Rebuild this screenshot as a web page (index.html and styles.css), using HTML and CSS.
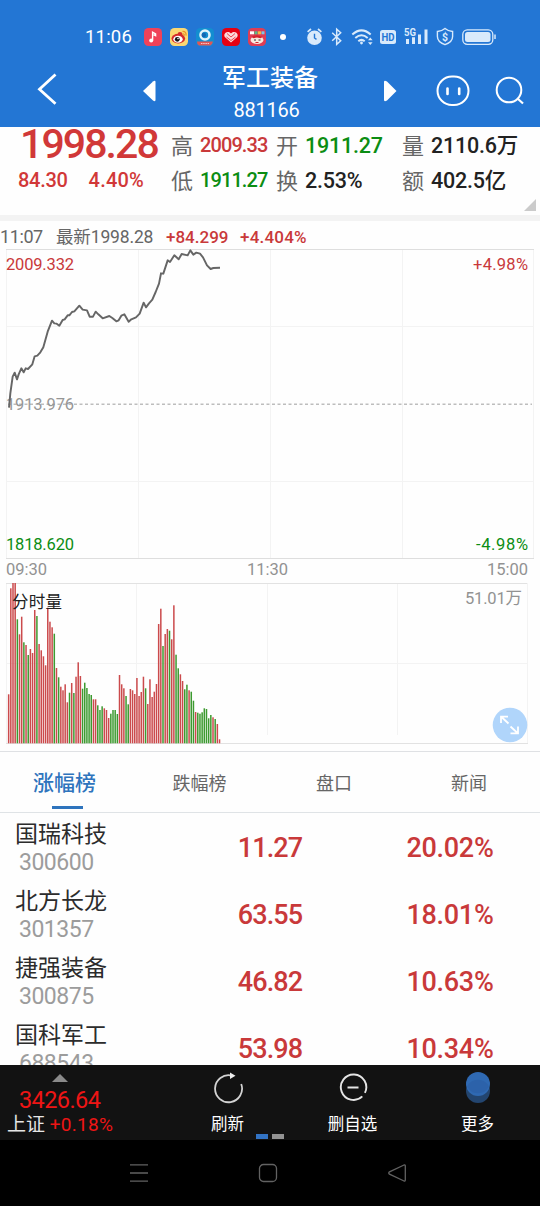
FILE: index.html
```html
<!DOCTYPE html>
<html lang="zh-CN">
<head>
<meta charset="utf-8">
<title>军工装备 881166</title>
<link rel="stylesheet" href="styles.css">
</head>
<body>
<div class="phone">
  <header class="top">
    <div class="status">
      <span class="clock">11:06</span>
      <svg class="apps" width="146" height="20" viewBox="0 0 146 20">
        <rect x="1" y="1" width="18" height="18" rx="4.5" fill="#f04259"/>
        <path d="M9.6 13.2V5.2l3 1.8v1.6l-2-1" fill="none" stroke="#fff" stroke-width="1.4"/><circle cx="8.2" cy="13.4" r="2" fill="#fff"/>
        <rect x="27" y="1" width="18" height="18" rx="4.5" fill="#fbd873"/>
        <ellipse cx="35.3" cy="11.6" rx="6.8" ry="4.9" fill="#d52b2a"/><circle cx="37" cy="7.3" r="2.4" fill="#d52b2a"/><ellipse cx="35" cy="12.3" rx="4.7" ry="3.5" fill="#fff"/><circle cx="34.3" cy="12.3" r="2.4" fill="#111"/><circle cx="35" cy="11.6" r=".8" fill="#fff"/><path d="M39.5 4.4q4-.2 3.5 4.2M39.5 6.8q2-.2 1.7 1.8" fill="none" stroke="#ed9427" stroke-width="1.3"/>
        <rect x="53" y="1" width="18" height="18" rx="4.5" fill="#138ed0"/>
        <circle cx="62" cy="8" r="4.5" fill="none" stroke="#dff3fb" stroke-width="2.6"/><circle cx="60.800" cy="8" r="2.300" fill="#1268b4"/><path d="M54 14.5h16l-1 2.6-1.6 1.4H56l-1.6-1.4z" fill="#df5656"/><path d="M58 16.5h8" stroke="#fbc5c5" stroke-dasharray="1.5 .7"/>
        <rect x="79" y="1" width="18" height="18" rx="4.5" fill="#e60012"/>
        <path d="M88 15.6 82.300 10.600c-3-3.200 1.500-8 5.700-4.200 4.200-3.800 8.700 1 5.700 4.200z" fill="#fbdada"/><path d="m84 6.500 4 3.500 4-3.500M83.500 10l4.500 3.500 4.500-3.500" fill="none" stroke="#e60012" stroke-width=".7"/>
        <rect x="105" y="1" width="18" height="18" rx="4.5" fill="#df3d55"/>
        <path d="M107 4.3h4v3h-4z" fill="#fff"/><path d="M111.5 4.3h3v3h-3z" fill="#56bc86"/><path d="M115 4.3h3v3h-3z" fill="#f5b840"/><path d="M118.5 4.3h3v3h-3z" fill="#7cc8e8"/><ellipse cx="114" cy="13" rx="6.5" ry="4" fill="#fae9df"/><path d="M108.5 10q5.5-3.500 11 0l-2 1.200-3.500-.6-3.500.6z" fill="#d5222d"/><path d="M111 13h2m2.500 0h2" stroke="#333"/><path d="M112.500 15.500h3" stroke="#d5222d"/>
        <circle cx="140" cy="10" r="3" fill="#fff"/>
      </svg>
      <svg class="sys" width="192" height="20" viewBox="0 0 192 20">
        <g fill="#d9eafb" stroke="#d9eafb">
          <circle cx="8.5" cy="10.8" r="7.3" stroke="none"/><path d="M1.6 4.8 5 2m7 0 3.4 2.8" fill="none" stroke-width="1.7"/><path d="M8.5 6.8v4.2l2 1.4" fill="none" stroke="#2376d4" stroke-width="1.4"/>
          <path d="m26.2 5.8 8.5 8-4 3.6V2.2l4 3.6-8.5 8" fill="none" stroke-width="1.5"/>
          <g fill="none" stroke-width="2"><path d="M46.3 7.5q9.2-8.3 18.4 0M49.3 11q6.2-5.4 12.4 0M52.3 14.2q3.2-2.7 6.4 0"/></g><circle cx="55.5" cy="16" r="1.4" stroke="none"/><path d="m62 13.2 2.3-2.7 2.3 2.7zm0 2 2.3 2.7 2.3-2.7z" stroke="none"/>
          <rect x="74" y="3" width="16" height="14" rx="2.5" stroke="none"/>
          <g stroke="none"><path d="M100 12h3v5h-3zM106 10.2h3V17h-3zM112 7.5h3V17h-3zM118.5 2.500h3V17h-3z"/></g>
          <path d="M139 1.500q3 2.500 7.600 3v5q0 5.500-7.600 8.200-7.600-2.700-7.600-8.200v-5q4.600-.5 7.600-3z" fill="none" stroke-width="1.400"/>
          <rect x="156.800" y="2.800" width="30" height="14.500" rx="4.500" fill="none" stroke-width="1.300"/><rect x="159" y="5" width="25.500" height="10" rx="2.500" stroke="none"/><path d="M189 7.500v4.500" stroke-width="1.500"/>
        </g>
        <text class="ic" x="75.500" y="14" textLength="13" lengthAdjust="spacingAndGlyphs" font-size="11" fill="#2376d4">HD</text>
        <text class="ic" x="98" y="8.800" textLength="12" lengthAdjust="spacingAndGlyphs" font-size="10" fill="#d9eafb">5G</text>
        <text class="ic" x="136" y="13.500" font-size="10.500" fill="#d9eafb">$</text>
      </svg>
    </div>
    <div class="titlebar">
      <svg class="back" width="20" height="34" viewBox="0 0 20 34"><path d="M18.500 2.500 2.500 17.300l16 14.500" fill="none" stroke="#fff" stroke-width="2.800"/></svg>
      <svg class="prev" width="13" height="22" viewBox="0 0 13 22"><path d="M0 11 10 1.500Q12.500 0 12.500 2v18q0 2-2.500.500z" fill="#fff"/></svg>
      <div class="name"><h1>军工装备</h1><p>881166</p></div>
      <svg class="next" width="13" height="22" viewBox="0 0 13 22"><path d="M12.500 11 3 1.500Q0 0 0 2v18q0 2 3 .500z" fill="#fff"/></svg>
      <svg class="bot" width="34" height="32" viewBox="0 0 34 32"><rect x="1.500" y="1.500" width="31" height="28.500" rx="14.500" fill="none" stroke="#fff" stroke-width="2"/><path d="M11.500 13.500v5.500M23.200 13.500v5.500" stroke="#fff" stroke-width="2.600" stroke-linecap="round"/></svg>
      <svg class="find" width="30" height="30" viewBox="0 0 30 30"><circle cx="14" cy="14" r="12.300" fill="none" stroke="#fff" stroke-width="2"/><path d="m22.500 22.500 5.500 5" stroke="#fff" stroke-width="2.200"/></svg>
    </div>
  </header>

  <section class="quote">
    <div class="last"><strong>1998.28</strong><div class="delta"><span>84.30</span><span>4.40%</span></div></div>
    <dl class="stats">
      <div><dt>高</dt><dd class="up small">2009.33</dd></div>
      <div><dt>开</dt><dd class="down">1911.27</dd></div>
      <div><dt>量</dt><dd>2110.6万</dd></div>
      <div><dt>低</dt><dd class="down small">1911.27</dd></div>
      <div><dt>换</dt><dd>2.53%</dd></div>
      <div><dt>额</dt><dd>402.5亿</dd></div>
    </dl>
    <i class="corner"></i>
  </section>

  <section class="tick"><span class="t1">11:07</span><span class="t2">最新1998.28</span><span class="up t3">+84.299</span><span class="up t4">+4.404%</span></section>

  <svg class="chart" width="540" height="334" viewBox="0 249 540 334">
    <g fill="none" stroke="#f3f3f3"><path d="M6.500 249v310M138.500 250v308M270.500 250v308M402.500 250v308M533.500 249v310M6 326.500h527M6 481.500h527"/><path d="M6 249.500h528M6 558.500h528" stroke="#dedede"/><path d="M8 404.300h524" stroke="#bdbdbd" stroke-width="1.400" stroke-dasharray="3 2.500"/></g>
    <g class="num" font-size="16.500">
      <text x="6" y="270" textLength="68" fill="#c9393a">2009.332</text>
      <text x="473" y="270" textLength="55" fill="#c9393a">+4.98%</text>
      <text x="6" y="410" textLength="68" fill="#969696">1913.976</text>
      <text x="6" y="550" textLength="68" fill="#0b8d13">1818.620</text>
      <text x="476" y="550" textLength="52" fill="#0b8d13">-4.98%</text>
      <text x="6" y="575" textLength="41" fill="#929292">09:30</text>
      <text x="247" y="575" textLength="41" fill="#929292">11:30</text>
      <text x="487" y="575" textLength="41" fill="#929292">15:00</text>
    </g>
    <g transform="translate(0 240) scale(.33333)"><polyline fill="none" stroke="#666" stroke-width="5.800" stroke-linejoin="round" points="27,503 31,460 38,410 44,398 51,418 56,403 64,385 71,397 77,385 84,387 97,373 104,349 112,347 121,337 130,322 143,275 156,242 163,250 170,251 178,257 188,240 194,238 203,226 208,226 216,216 223,214 238,197 248,209 261,211 269,230 279,230 287,215 295,223 308,235 328,228 337,234 349,244 356,241 364,227 373,223 386,245 394,238 408,232 419,221 431,188 438,202 447,190 457,179 467,156 477,131 483,100 490,101 503,61 510,66 523,46 536,58 545,42 563,46 571,31 580,44 589,38 600,41 609,52 621,76 632,87 640,84 660,83"/></g>
  </svg>

  <section class="volume">
    <svg width="540" height="168" viewBox="0 583 540 168">
      <g fill="none" stroke="#f3f3f3"><path d="M6.500 583v161M136.500 583v152M267.500 583v152M397.500 583v152M527.500 583v160M6 663.500h522"/><path d="M6 583.500h521M6 743.500h522" stroke="#e2e2e2"/></g>
      <g id="bars"></g>
      <text class="num" x="12" y="608" font-size="16.500" textLength="50" fill="#222">分时量</text>
      <text class="num" x="465" y="603.500" font-size="16.500" textLength="57" fill="#929292">51.01万</text>
      <circle cx="510" cy="725" r="17.300" fill="#b0d5fb"/>
      <path d="m501.500 717 7 6.500m-7.500-.5v-6.300h7M510.500 726.500l7 6.500m.500-6.500v6.800h-7.500" fill="none" stroke="#fff" stroke-width="1.800"/>
    </svg>
  </section>

  <nav class="tabs"><span class="on">涨幅榜</span><span>跌幅榜</span><span>盘口</span><span>新闻</span></nav>

  <main class="list">
    <div class="row"><div class="stock"><b>国瑞科技</b><small>300600</small></div><span class="price">11.27</span><span>20.02%</span></div>
    <div class="row"><div class="stock"><b>北方长龙</b><small>301357</small></div><span class="price">63.55</span><span>18.01%</span></div>
    <div class="row"><div class="stock"><b>捷强装备</b><small>300875</small></div><span class="price">46.82</span><span>10.63%</span></div>
    <div class="row"><div class="stock"><b>国科军工</b><small>688543</small></div><span class="price">53.98</span><span>10.34%</span></div>
  </main>

  <footer class="tools">
    <div class="index"><i class="caret"></i><span class="value">3426.64</span><p>上证 <em>+0.18%</em></p></div>
    <div class="tool"><svg width="32" height="34" viewBox="0 0 32 34"><path d="M29.200 13a13.500 13.500 0 1 1-9.500-8.400" fill="none" stroke="#d2d2d2" stroke-width="1.800"/><path d="m18 1.500 5.500 3.300L18 8z" fill="#eee"/></svg><span>刷新</span></div>
    <div class="tool"><svg width="32" height="34" viewBox="0 0 32 34"><path d="M25.300 25.400a12.700 12.700 0 1 1 2.600-3.500M10.500 16.500h11" fill="none" stroke="#e4e4e4" stroke-width="1.900"/></svg><span>删自选</span></div>
    <div class="tool"><svg width="32" height="34" viewBox="0 0 32 34"><circle cx="16" cy="20" r="12" fill="#23456f"/><circle cx="16" cy="13" r="12" fill="#2f69b2"/><path d="M5.200 15.500a12 12 0 0 1 21.600 0 12 12 0 0 1-21.600 0" fill="#2c62aa"/></svg><span>更多</span></div>
    <div class="pager"><i></i><i></i></div>
  </footer>

  <nav class="system">
    <svg width="20" height="20" viewBox="0 0 20 20"><path d="M1 1.800h18M1 10h18M1 18.200h18"/></svg>
    <svg width="20" height="20" viewBox="0 0 20 20"><rect x="1.500" y="1.500" width="17" height="17" rx="4"/></svg>
    <svg width="20" height="20" viewBox="0 0 20 20"><path d="M17 2 2.500 8.800q-1.500 1.200 0 2.400L17 18q1.300.3 1.300-1V3q0-1.300-1.300-1z"/></svg>
  </nav>
</div>
<script src="bars.js"></script>
</body>
</html>
```
FILE: styles.css
```css
* { box-sizing: border-box; margin: 0; padding: 0; }
body { background: #000; font-family: Roboto, "Noto Sans CJK SC", sans-serif; }
svg { display: block; flex: none; }
.phone { width: 540px; height: 1206px; background: #fefefe; display: flex; flex-direction: column; overflow: hidden; }
.phone > * { flex: none; }

.top { height: 127px; background: #2376d4; color: #fff; }
.status { height: 59px; padding: 14px 0 0 85px; display: flex; align-items: center; }
.clock { width: 58px; font-size: 18.5px; letter-spacing: .2px; }
.sys { margin-left: 17px; }
.ic { font-family: Roboto, sans-serif; font-weight: 700; }
.titlebar { height: 68px; display: flex; align-items: flex-start; padding-left: 37px; }
.back { margin-top: 13px; }
.prev { margin: 21px 0 0 86px; }
.name { width: 228px; text-align: center; }
.name h1 { font-size: 24px; line-height: 36px; font-weight: 500; padding-top: 1px; }
.name p { font-size: 20px; line-height: 26px; letter-spacing: -.2px; padding-right: 7px; margin-top: 1px; }
.next { margin-top: 21px; }
.bot { margin: 16px 0 0 39px; }
.find { margin: 17px 0 0 25px; }

.quote { height: 88px; display: flex; position: relative; }
.last { width: 172px; color: #d13838; padding-left: 18px; }
.last strong { display: block; font-size: 41px; line-height: 35px; font-weight: 500; letter-spacing: -1.9px; padding-left: 2px; }
.delta { display: flex; justify-content: space-between; width: 126px; font-size: 20px; line-height: 24px; margin-top: 6px; font-weight: 500; letter-spacing: -.3px; }
.delta span + span { letter-spacing: .2px; }
.stats { display: grid; grid-template-columns: 105px 126px 137px; grid-template-rows: 35px 35px; padding-top: 1px; }
.stats div { display: flex; align-items: center; margin-left: -1px; }
dt { width: 29px; font-size: 22px; line-height: 35px; padding-top: 1px; color: #666; }
dd { font-size: 21.5px; line-height: 35px; font-weight: 500; color: #222; letter-spacing: -.2px; white-space: nowrap; }
dd.small { font-size: 20px; letter-spacing: -.9px; }
.stats .up { color: #c9393a; }
.stats .down { color: #0b8d13; }
.up { color: #c9393a; }
.corner { position: absolute; right: 4px; bottom: 4px; border-style: solid; border-width: 0 0 12px 12px; border-color: transparent transparent #cbcbcb; }

.tick { height: 34px; border-top: 6px solid #f3f3f3; display: flex; font-size: 18px; line-height: 32px; color: #666; white-space: nowrap; }
.t1 { width: 56px; letter-spacing: -.4px; }
.t2 { width: 110px; font-size: 17.500px; letter-spacing: -.15px; }
.t3 { width: 74px; font-size: 17px; font-weight: 500; }
.t4 { font-size: 17px; font-weight: 500; letter-spacing: .2px; }
.num { font-family: Roboto, "Noto Sans CJK SC", sans-serif; }
.volume { height: 168px; }

.tabs { height: 62px; border-top: 1px solid #dfe1e4; border-bottom: 1px solid #dfe3e6; display: flex; color: #666; font-size: 18px; line-height: 63px; text-align: center; }
.tabs .on { width: 129px; font-size: 21px; font-weight: 500; color: #2e74bd; background: linear-gradient(#2e74bd, #2e74bd) 52px 54px / 31px 3px no-repeat; }
.tabs span:nth-child(2) { width: 141px; }
.tabs span:nth-child(3) { width: 128px; }
.tabs span:nth-child(4) { width: 142px; }

.list { height: 252px; overflow: hidden; }
.row { height: 67px; display: grid; grid-template-columns: 180px 180px 180px; text-align: center; font-size: 27px; font-weight: 500; line-height: 71px; color: #c9393a; letter-spacing: -.3px; }
.price { letter-spacing: -.9px; }
.stock { text-align: left; padding-left: 15px; }
.stock b { display: block; font-size: 23px; line-height: 34px; padding-top: 5px; font-weight: 400; color: #2c2c2c; letter-spacing: 0; }
.stock small { display: block; font-size: 23px; line-height: 22px; padding-left: 4px; font-weight: 400; color: #9c9c9c; letter-spacing: -.5px; }

.tools { height: 75px; position: relative; background: #121212; color: #fff; display: flex; }
.index { width: 165px; }
.caret { display: block; margin: 9px 0 0 52px; width: 16px; border: 8px solid transparent; border-top: 0; border-bottom-color: #8a8a8a; }
.value { display: block; font-size: 23.5px; line-height: 26px; padding-left: 19px; margin-top: 5px; color: #ee1515; letter-spacing: -.6px; }
.index p { font-size: 19px; line-height: 23px; padding-left: 7px; color: #e5e5e5; white-space: nowrap; }
em { font-style: normal; color: #ee1515; letter-spacing: .3px; }
.tool { width: 125px; display: flex; flex-direction: column; align-items: center; padding-top: 6px; font-size: 16.5px; line-height: 32px; }
.tool span { margin-top: 4px; }
.pager { position: absolute; left: 256px; bottom: 1px; display: flex; gap: 4px; }
.pager i { width: 12px; height: 5px; background: #3273c4; }
.pager i + i { background: #929292; }

.system { height: 66px; background: #000; display: flex; justify-content: center; gap: 109px; padding: 23px 5px 0 0; }
.system svg { fill: none; stroke: #626262; stroke-width: 1.3; }
```
FILE: bars.js
```js
// Each entry: bar top (thirds of a pixel, baseline at 505) and direction.
const bars = "358r 40r 22r 22r 133g 178r 125r 202g 210r 240g 222r 234r 105r 123g 207r 226r 244r 271r 98r 140r 157r 176g 279r 307g 335r 346r 328r 382r 353g 324r 354g 305r 262r 303r 341g 323g 339g 357g 360g 373r 373r 391g 405g 394g 400r 405r 429r 416g 405g 405g 417g 300r 328r 340r 363g 388g 342r 346r 357r 309r 363r 351r 305r 340g 387r 313r 366r 350r 327r 147r 101r 213g 177r 162r 167g 193r 91r 239g 280g 298r 318r 343g 329g 346r 350g 377g 411r 413g 416g 412g 400g 402g 430g 420g 427r 432g 447r 493r".split(" ");
const group = document.getElementById("bars");
bars.forEach((item, i) => {
  const rect = document.createElementNS("http://www.w3.org/2000/svg", "rect");
  const top = parseInt(item, 10);
  rect.setAttribute("x", (7.9 + i * 2.174).toFixed(2));
  rect.setAttribute("y", (575 + top / 3).toFixed(1));
  rect.setAttribute("width", 1.5);
  rect.setAttribute("height", ((505 - top) / 3).toFixed(1));
  rect.setAttribute("fill", item.endsWith("g") ? "#3d9a30" : "#cb4a4c");
  group.appendChild(rect);
});
```
